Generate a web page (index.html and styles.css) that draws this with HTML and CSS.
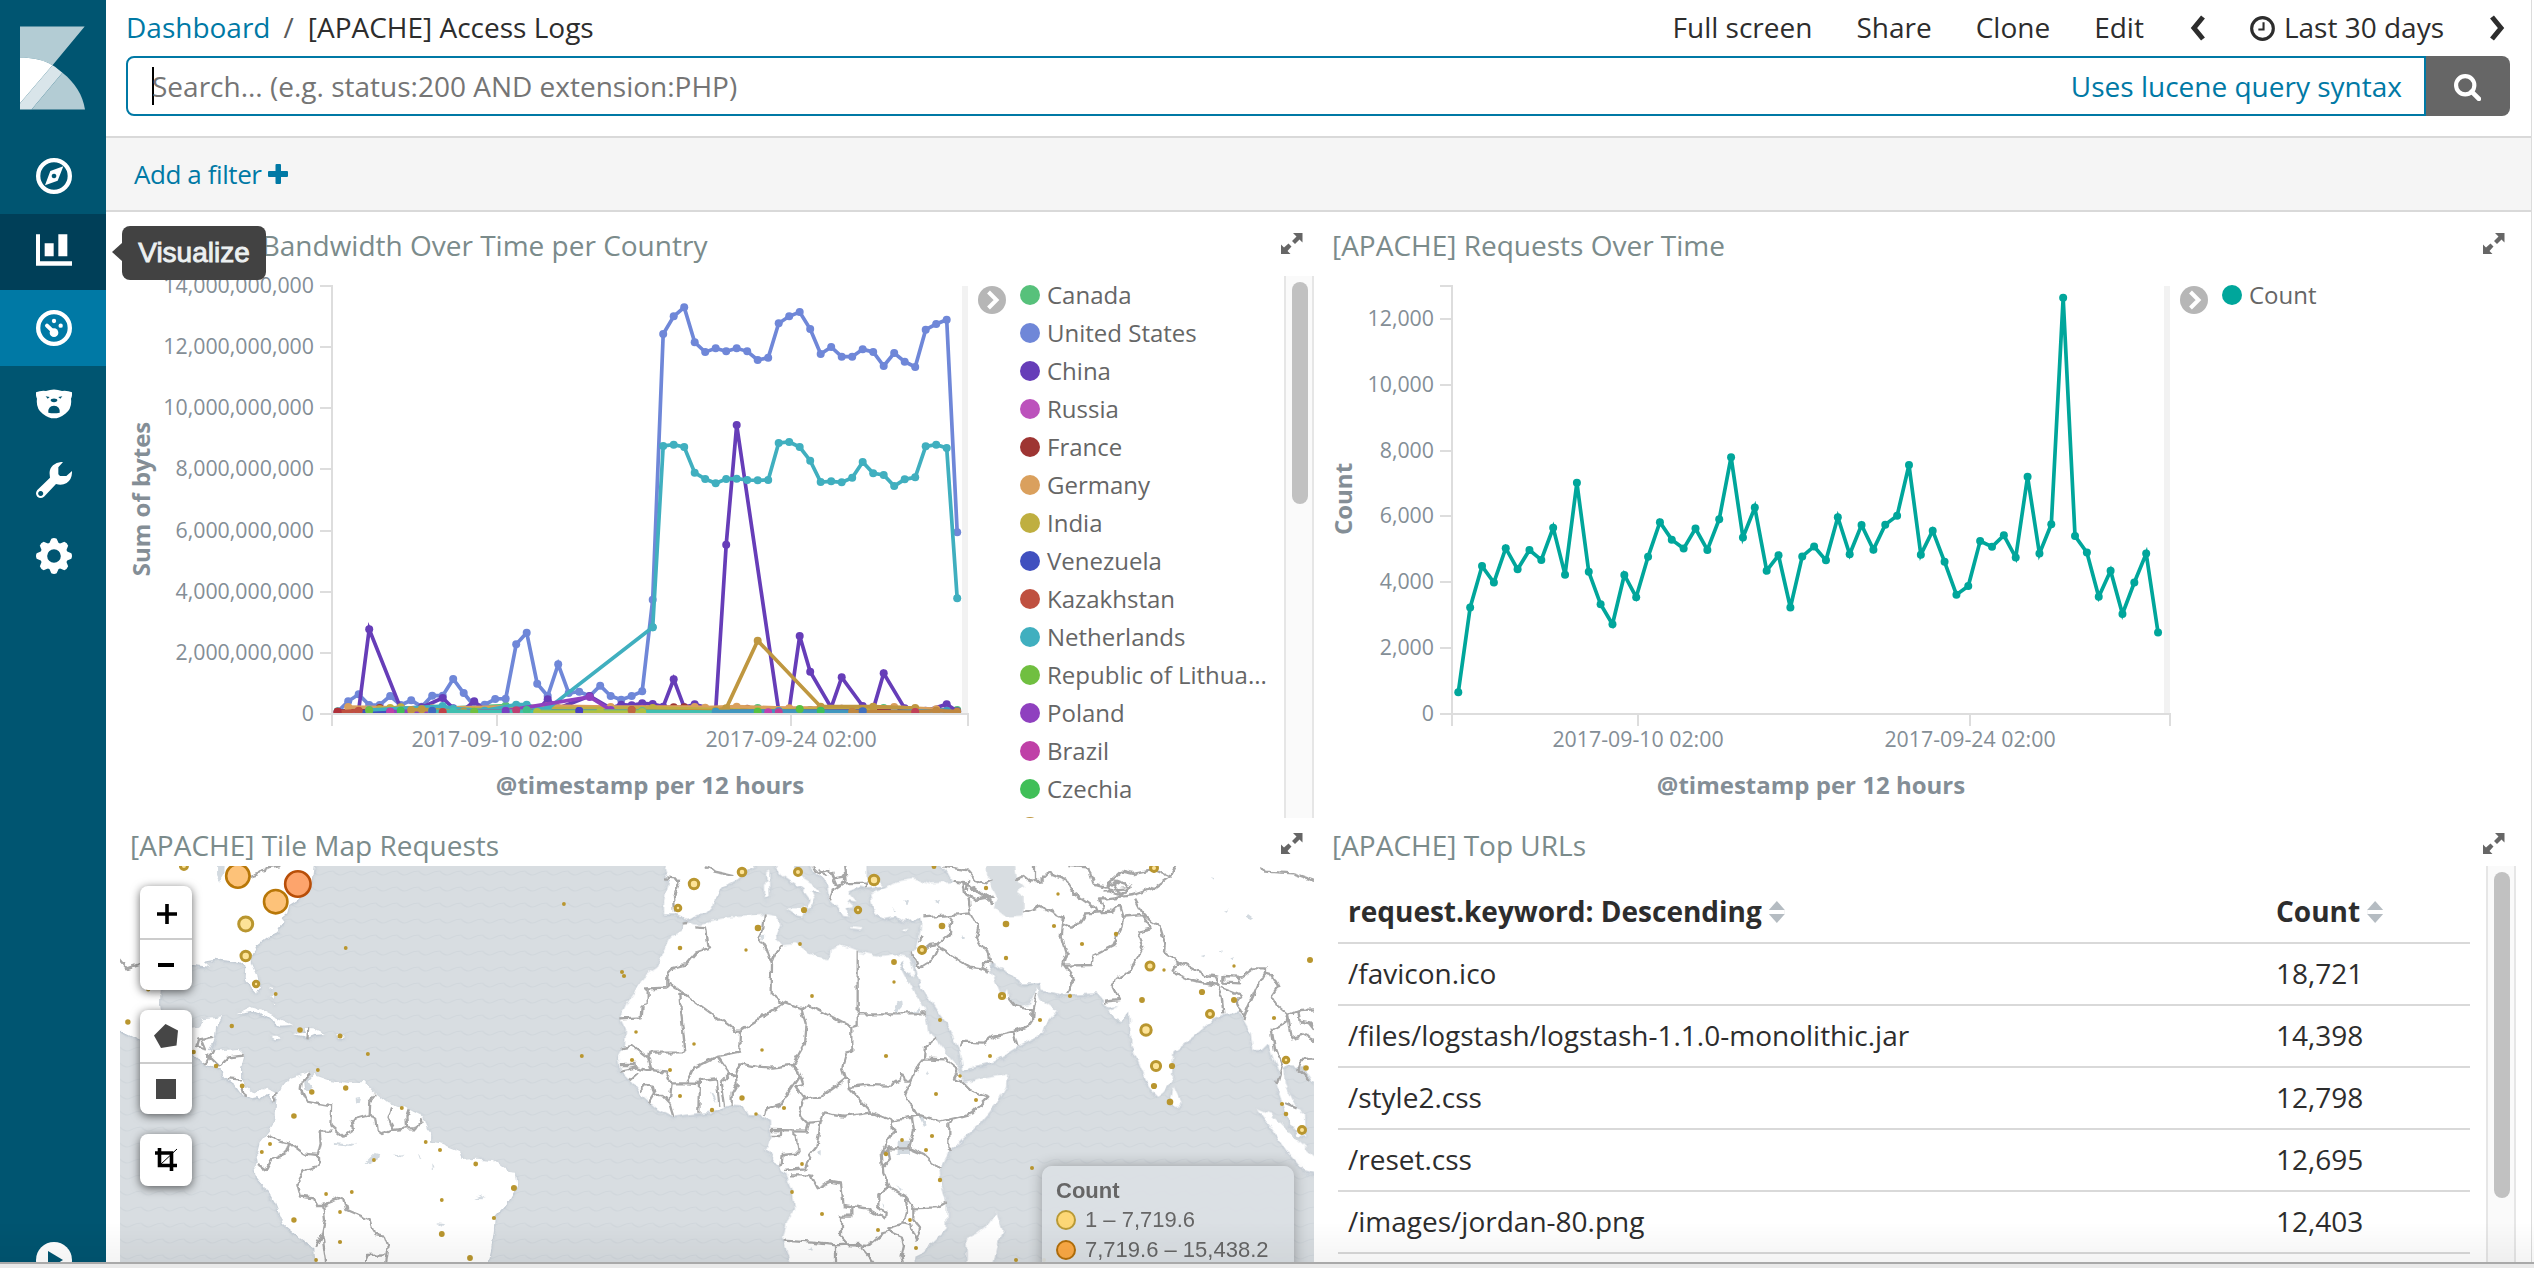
FILE: index.html
```html
<!DOCTYPE html>
<html lang="en">
<head>
<meta charset="utf-8">
<title>[APACHE] Access Logs - Kibana</title>
<link rel="stylesheet" href="styles.css">
</head>
<body>
<div class="app">
  <nav class="sidebar">
    <svg class="logo" viewBox="60 78 196 251"><path fill="#b3ccd4" d="M60 78H255L158 195C130 178 95 172 60 172Z"/><path fill="#fff" d="M60 172C95 172 130 178 158 195L60 310Z"/><path fill="#d9e5ea" d="M158 195C168 201 178 209 188 218L95 329H60V310Z"/><path fill="#b3ccd4" d="M188 218C226 248 249 285 256 329H95Z"/></svg>
    <a class="nav-item"><svg viewBox="108 474 108 108"><circle cx="162" cy="528" r="47.500" fill="none" stroke="#fff" stroke-width="13"/><path fill="#fff" fill-rule="evenodd" d="M190 499L173 542L135 556L151 513ZM162 521a7 7 0 1 0 .1 0Z"/></svg></a>
    <a class="nav-item is-hovered"><svg viewBox="108 702 108 108"><path fill="#fff" d="M108 703h12v81h96v13H108ZM134 730h27v39h-27ZM175 703h27v66h-27Z"/></svg><span class="tooltip">Visualize</span></a>
    <a class="nav-item is-active"><svg viewBox="108 30 108 108"><circle cx="162" cy="84" r="47.500" fill="none" stroke="#fff" stroke-width="13"/><g fill="#fff"><circle cx="162" cy="63" r="6.500"/><circle cx="182" cy="77" r="6.500"/><circle cx="162" cy="98" r="13"/></g><path d="M141 77L162 97" stroke="#fff" stroke-width="12" stroke-linecap="round"/></svg></a>
    <a class="nav-item"><svg viewBox="108 258 108 108"><path fill="#fff" d="M108 277Q122 271 138 273Q162 264 186 273Q202 271 216 277Q217 289 213 296Q217 325 196 341Q178 355 162 355Q146 355 128 341Q107 325 111 296Q107 289 108 277Z"/><g fill="#005571"><path d="M145 338Q143 318 162 317Q181 318 179 338Q162 341 145 338Z"/><ellipse cx="162" cy="301" rx="10" ry="5.500"/><path d="M137 289l12 2-6 5ZM187 289l-12 2 6 5Z"/></g></svg></a>
    <a class="nav-item"><svg viewBox="108 486 108 108"><path fill="#fff" fill-rule="evenodd" d="M189 486Q171 485 159 496Q147 507 149 523L150 533L112 570Q104 580 112 590Q122 598 132 590L168 552Q186 557 200 549Q217 538 216 513L199 528L180 528L175 523V502ZM122 573a7.500 7.500 0 1 0 .1 0Z"/></svg></a>
    <a class="nav-item"><svg viewBox="-54 -54 108 108"><circle r="31" fill="none" stroke="#fff" stroke-width="21"/><g fill="#fff"><path id="tooth" d="M-15-36L-8-52Q0-56 8-52L15-36Z"/><use href="#tooth" transform="rotate(45)"/><use href="#tooth" transform="rotate(90)"/><use href="#tooth" transform="rotate(135)"/><use href="#tooth" transform="rotate(180)"/><use href="#tooth" transform="rotate(225)"/><use href="#tooth" transform="rotate(270)"/><use href="#tooth" transform="rotate(315)"/></g></svg></a>
    <a class="nav-toggle"><svg viewBox="0 0 36 36"><circle cx="18" cy="18" r="18" fill="#fff"/><path fill="#005571" d="M12 9L27 18L12 27Z"/></svg></a>
  </nav>

  <main class="main">
    <header class="topbar">
      <div class="crumbs"><a>Dashboard</a><span class="slash">/</span><span>[APACHE] Access Logs</span></div>
      <div class="actions">
        <a class="act-full">Full screen</a><a class="act-share">Share</a><a class="act-clone">Clone</a><a class="act-edit">Edit</a>
        <svg class="chev" viewBox="0 0 18 26"><path d="M15 2L6 13L15 24" fill="none" stroke="#2d2d2d" stroke-width="5"/></svg>
        <a class="time"><svg viewBox="0 0 24 24"><circle cx="12" cy="12" r="10.400" fill="none" stroke="#2d2d2d" stroke-width="3"/><path d="M13 6V13H8" fill="none" stroke="#2d2d2d" stroke-width="2"/></svg><span>Last 30 days</span></a>
        <svg class="chev chev-next" viewBox="0 0 18 26"><path d="M3 2L12 13L3 24" fill="none" stroke="#2d2d2d" stroke-width="5"/></svg>
      </div>
    </header>
    <div class="search">
      <div class="search-input"><i class="caret"></i><span class="placeholder">Search... (e.g. status:200 AND extension:PHP)</span><a class="syntax">Uses lucene query syntax</a></div>
      <button class="search-btn"><svg viewBox="0 0 26 26"><circle cx="10.800" cy="10.800" r="8.800" fill="none" stroke="#fff" stroke-width="4"/><path d="M17 17L24 24" stroke="#fff" stroke-width="4.500" stroke-linecap="round"/></svg></button>
    </div>
    <div class="filters"><a>Add a filter</a><svg viewBox="0 0 20 20"><path fill="#0079a5" d="M7.500 1Q7.500 0 8.500 0H12Q13 0 13 1V7H19Q20 7 20 8V12Q20 13 19 13H13V19Q13 20 12 20H8.500Q7.500 20 7.500 19V13H1Q0 13 0 12V8Q0 7 1 7H7.500Z"/></svg></div>

    <div class="grid">
      <section class="panel">
        <div class="panel-head"><h2>[APACHE] Bandwidth Over Time per Country</h2><svg class="expand" viewBox="0 0 22 22"><use href="#expand-icon"/></svg></div>
        <div class="panel-body vis">
          <svg class="chart" id="bandwidth" width="850" height="552"></svg>
          <svg class="toggle" viewBox="0 0 28 28"><circle cx="14" cy="14" r="14" fill="#b6b6b6"/><path d="M10.500 6L18.500 14L10.500 22" fill="none" stroke="#fff" stroke-width="4"/></svg>
          <ul class="legend">
            <li><i style="background:#57c17b"></i>Canada</li>
            <li><i style="background:#6f87d8"></i>United States</li>
            <li><i style="background:#663db8"></i>China</li>
            <li><i style="background:#bc52bc"></i>Russia</li>
            <li><i style="background:#9e3533"></i>France</li>
            <li><i style="background:#daa05d"></i>Germany</li>
            <li><i style="background:#bfaf40"></i>India</li>
            <li><i style="background:#4050bf"></i>Venezuela</li>
            <li><i style="background:#bf5040"></i>Kazakhstan</li>
            <li><i style="background:#40afbf"></i>Netherlands</li>
            <li><i style="background:#70bf40"></i>Republic of Lithua...</li>
            <li><i style="background:#8f40bf"></i>Poland</li>
            <li><i style="background:#bf40a7"></i>Brazil</li>
            <li><i style="background:#40bf58"></i>Czechia</li>
            <li><i style="background:#bf9740"></i>United Kingdom</li>
          </ul>
          <div class="scroll"><i class="thumb"></i></div>
        </div>
      </section>

      <section class="panel">
        <div class="panel-head"><h2>[APACHE] Requests Over Time</h2><svg class="expand" viewBox="0 0 22 22"><use href="#expand-icon"/></svg></div>
        <div class="panel-body vis">
          <svg class="chart" id="requests" width="850" height="552"></svg>
          <svg class="toggle" viewBox="0 0 28 28"><circle cx="14" cy="14" r="14" fill="#b6b6b6"/><path d="M10.500 6L18.500 14L10.500 22" fill="none" stroke="#fff" stroke-width="4"/></svg>
          <ul class="legend"><li><i style="background:#00a69b"></i>Count</li></ul>
        </div>
      </section>

      <section class="panel">
        <div class="panel-head"><h2>[APACHE] Tile Map Requests</h2><svg class="expand" viewBox="0 0 22 22"><use href="#expand-icon"/></svg></div>
        <div class="panel-body map">
          <svg class="map-canvas" width="1194" height="396">
            <defs>
              <symbol id="expand-icon" viewBox="0 0 22 22"><path fill="#666" d="M12 0H21.500V9.500L18.500 6.500L14 11L11 8L15.500 3.500ZM9.500 21H0V11.500L3 14.500L7.500 10.500L10.500 13.500L6.500 18Z"/><path d="M9 9L13 13" stroke="#fff" stroke-width="1"/></symbol>
              <pattern id="waves" width="21.330" height="16" patternUnits="userSpaceOnUse"><path d="M0 5Q5.300 11 10.660 8T21.330 5" fill="none" stroke="#d1d7dc" stroke-width="1.200"/></pattern>
              <filter id="coast" x="-2%" y="-2%" width="104%" height="104%"><feDropShadow dx="0" dy="1" stdDeviation="1.600" flood-color="#a9b6c4" flood-opacity=".8"/></filter>
              <filter id="rough" filterUnits="userSpaceOnUse" x="-10" y="-10" width="1214" height="416" color-interpolation-filters="sRGB"><feTurbulence type="fractalNoise" baseFrequency=".11" numOctaves="2" seed="4"/><feDisplacementMap in="SourceGraphic" scale="7" xChannelSelector="R" yChannelSelector="G"/></filter>
            </defs>
            <rect width="1194" height="396" fill="#d8dde1"/><rect width="1194" height="396" fill="url(#waves)"/>
            <g filter="url(#rough)">
            <g filter="url(#coast)" fill="#fff">
              <g transform="translate(-20 -46) scale(.35714 .33333)">
                <path d="M20 100L605 100L596 180L560 235L530 255L524 280L510 292L515 305L500 322L505 332L470 350L440 375L425 400L425 430L440 465L445 500L437 521L420 500L408 470L410 445L385 425L340 420L320 416L290 422L308 440L262 435L200 425L175 460L170 500L168 550L172 580L200 615L240 625L275 620L288 598L342 592L325 625L320 660L305 690L340 694L385 690L402 705L392 745L392 775L405 800L425 815L440 820L465 803L485 812L497 830L485 845L470 820L450 838L440 828L425 832L400 825L380 795L358 778L340 750L290 730L260 700L200 690L110 658L20 610Z"/>
                <path d="M495 835L510 800L530 775L585 756L572 785L575 812L590 812L585 785L600 765L640 780L700 790L740 786L765 815L805 850L850 860L905 890L915 925L930 945L930 965L950 970L1010 995L1015 1020L1050 1016L1100 1020L1140 1052L1165 1055L1168 1095L1140 1150L1105 1190L1103 1230L1095 1290L1080 1360L605 1360L600 1285L560 1255L515 1215L490 1150L460 1095L435 1065L432 1040L445 1030L440 1000L448 965L475 930L492 900L492 860Z"/>
                <path d="M382 580L420 560L455 570L490 590L540 614L505 617L470 592L425 573ZM545 642L575 638L565 624L600 625L632 642L600 645L585 652ZM480 650L500 650L508 655L490 658ZM662 645L685 645L684 653L664 653ZM474 530l8-6 2 12ZM486 548l8 4 -4 4ZM475 500l14 4-4 4Z"/>
              </g>
              <g transform="translate(480 -46) scale(.33333)">
                <path d="M250 306L300 315L330 303L380 293L450 288L500 283L532 290L538 315L528 340L530 360L545 376L590 372L630 400L680 424L692 410L695 385L720 373L780 398L830 410L880 402L925 410L938 455L940 470L925 460L905 422L900 432L930 490L975 570L985 640L1010 662L1040 700L1080 745L1078 765L1095 790L1150 775L1222 763L1218 800L1190 850L1140 910L1085 960L1045 1000L1018 1050L1025 1100L1040 1150L1040 1225L1000 1265L950 1310L935 1360L580 1360L560 1290L548 1258L562 1200L585 1165L577 1110L555 1060L525 1020L500 990L512 950L510 900L490 888L445 885L430 860L390 856L335 875L290 880L220 890L170 865L125 825L95 785L60 750L55 710L72 680L75 630L60 600L85 545L115 500L130 470L175 440L185 400L215 350L245 330Z"/>
                <path d="M195 150L205 120L470 100L462 140L430 160L410 178L370 200L345 230L340 260L318 282L290 285L262 300L245 290L225 280L192 280L192 240L205 185Z"/>
                <path d="M525 100L530 145L545 165L580 190L610 210L632 240L620 272L632 265L645 240L632 210L662 218L640 195L612 178L585 140L585 100ZM562 265L618 264L610 290L590 285ZM495 190L510 185L512 230L495 238ZM498 160L508 155L508 185L500 182Z"/>
                <path d="M625 100L628 135L650 160L680 190L688 235L715 262L730 288L745 290L740 265L760 262L740 240L770 245L745 215L780 200L805 205L850 200L830 180L800 178L800 100ZM752 318l34 4-2 6-30-3ZM905 332l20-6-8 10Z"/>
                <path d="M810 220L850 208L890 185L940 177L990 190L1060 187L1045 160L1000 120L1000 100L2190 100L2190 790L2142 788L2110 740L2062 735L2050 745L2055 790L2090 865L2112 880L2115 950L2095 945L2070 910L2055 870L2030 800L2040 760L2020 715L2005 670L1985 690L1960 690L1952 640L1915 575L1870 582L1840 600L1780 650L1720 695L1715 780L1690 815L1672 828L1650 805L1625 750L1595 680L1587 575L1565 603L1540 595L1525 572L1555 555L1525 560L1490 520L1400 525L1325 512L1320 485L1315 490L1260 490L1220 455L1178 430L1168 440L1185 480L1208 535L1225 510L1228 540L1250 563L1290 550L1308 505L1325 540L1370 572L1335 615L1330 640L1250 680L1180 725L1090 748L1075 680L1040 610L1010 570L975 520L950 470L945 440L935 405L950 385L958 350L965 310L960 292L910 303L890 290L855 297L825 280L815 245Z"/>
                <path d="M1190 1178L1208 1232L1192 1270L1175 1360L1100 1360L1100 1255L1130 1240L1170 1210ZM1720 798L1742 845L1730 862L1712 850ZM1973 868L2015 885L2080 950L2142 1005L2180 1040L2180 1070L2110 1050L2065 1000L2025 940Z"/>
              </g>
            </g>
            <g fill="#d3dae0">
              <path fill="#d8dde1" transform="translate(480 -46) scale(.33333)" d="M1160 100L1240 100L1252 180L1270 200L1250 215L1270 230L1270 290L1220 293L1185 265L1190 230L1165 180Z"/>
              <path transform="translate(480 -46) scale(.33333)" d="M885 575l10-25 12-10 2 20-20 22ZM925 580l30-15 6 8-30 10ZM890 962h40v40h-40ZM955 885l15 6 10 25-8 4ZM655 995l10-5v16l-8 2ZM330 815l14 10 5 25-12-18ZM480 340l14 10-5 6ZM975 750l12 10-5 5ZM1932 285l12-6 16 12-12 6ZM1860 390l12 2-4 6ZM1830 172l10 4-6 4ZM1868 272l16-3-4 6ZM1802 408l14-4-4 8ZM1888 412l14-4-6 10ZM910 240l14 4-6 10ZM1000 245l24-6-8 12ZM880 265l8 6-6 4ZM1085 345l10 8-4 8ZM620 1290l16-8-2 10ZM850 1150l8 8-4 6ZM885 1095l24 14-6 4Z"/>
              <path transform="translate(-20 -46) scale(.35714 .33333)" d="M325 110L350 110L348 165L335 188L325 165ZM578 780L590 795L595 812L582 812ZM716 830l12-2-3 20-8 4ZM740 1030l30-32 12 4-8 22-20 6ZM820 1000l30 4-8 8ZM890 1000l10 14-4 4ZM930 1030l10 15-8 2ZM1048 1136l26-12-8 14ZM942 1210l16 2-8 8ZM655 966l60 6-12 6-48-6Z"/>
            </g>
            <g class="borders">
              <path transform="translate(-20 -46) scale(.35714 .33333)" d="M588 760L565 785L562 810L578 845L625 855L650 860L648 920L680 950L708 930L705 900L755 885L757 840L770 822M755 885L770 890L775 930L790 942L820 930L805 895L815 862M820 930L860 925L858 890L865 868M860 925L885 925L903 895M650 935L615 935L618 970L610 1005L570 1000L530 968L500 960L472 942M530 968L520 1000L480 1020L465 1050L445 1035M610 1005L612 1038L570 1050L550 1090L560 1130L600 1135L605 1155L625 1155L680 1132L690 1170L755 1200L768 1245L798 1250L808 1280L800 1340M625 1155L630 1200L622 1245L605 1280M622 1245L635 1340M735 1340L750 1305L800 1303M272 682L278 658L320 650M265 680L295 688L285 662M290 730L302 722L318 690M302 705L335 740L360 712L400 707M358 775L392 778M398 800L406 830M485 845L495 820M56 420L75 445L110 432M415 172L465 155L470 142L505 135M583 622L581 655"/>
              <path transform="translate(480 -46) scale(.33333)" d="M245 308L262 306M292 322L315 325L322 375L330 382L290 395L255 435L215 445L202 460L202 506L143 508L143 555L128 560L125 592L58 595M202 485L405 632L420 632L552 550L515 525L516 430L500 385L478 350L490 325L494 283M515 425L525 400L547 375M552 550L600 567L625 553L755 622L773 617L773 395M773 580L978 580M757 622L757 690L740 695L727 740L738 775L700 805L665 830L612 835M605 567L617 610L612 672L578 732L600 765L610 795L588 800L612 835L598 865L605 895L625 915M420 632L418 695L352 708L280 745L258 790L212 790M262 522L238 525L256 697L148 698L142 715L152 750M62 685L100 678L143 712M152 750L200 755L215 790L208 850L220 890M60 735L110 735M60 752L110 742L152 752M90 780L115 757M122 812L135 795L158 797L165 825L150 850M165 825L185 825L208 850M298 878L300 780L350 775L358 858M258 790L300 792M365 785L375 858M352 708L388 760L365 785M388 760L408 765L410 795L395 820L395 858M408 765L420 730L470 740L515 743L575 735L590 742L600 765L570 810L545 850L500 865L495 885M512 930L620 932L628 908L662 905L670 880L730 890L815 877M512 948L543 948L543 932M575 932L590 945L596 1000L548 1005L545 1030L540 1040M662 905L650 980L630 1005L615 1045L555 1050M570 1066L630 1066L650 1105L690 1085L720 1090L728 1155L800 1165L855 1195L857 1175L835 1165L835 1120L870 1105L850 1060L845 1000L880 930L872 900L815 877L750 805L745 780L732 775M750 800L800 795L870 797L900 780L905 755L915 785L932 785L955 735L972 715L975 680L1008 655M932 785L915 830L945 870L960 890L875 902M972 715L1035 718L1075 750L1062 775L1080 780L1110 810L1165 830L1115 880L1060 895L1020 905L960 885M1060 895L1048 915L1048 985L1060 995M935 890L942 930L928 985L865 985L850 1000M928 985L975 1005L1020 1048M850 1040L870 1020L865 985M1040 1145L1010 1162L940 1165L915 1130L870 1105M915 1130L918 1180L910 1210L865 1225L870 1235L905 1250L912 1280L905 1310L912 1340M940 1165L940 1200L960 1225L948 1262L935 1230L930 1215L910 1210M757 1160L757 1190L723 1190L723 1250L745 1275L805 1278L850 1240L870 1235M548 1262L640 1268L705 1276L775 1272L830 1340M705 1276L705 1340M195 175L240 180L222 230L225 275M318 138L340 155L400 168M640 140L660 160L690 150L700 175L735 170L735 190L710 198L700 175M690 235L700 210L730 190L800 188L802 205M735 130L740 185M660 145L680 170M1030 140L1100 150L1125 180L1155 190L1175 180M1060 185L1100 190L1130 215L1170 240M1090 190L1095 220L1125 240L1178 230M1105 180L1100 210M1120 200L1150 225L1180 250M1105 230L1112 280L970 292M1112 280L1135 320L1128 350L1165 400L1172 430M1055 290L1050 340L1012 372L990 375L960 400M1012 372L1020 385L1110 440L1145 445L1170 455M1012 385L995 420L960 442L945 440M935 400L950 440M1145 440L1155 428L1180 430M968 345L960 365M1082 680L1088 665L1155 668L1180 650L1240 635L1290 615L1296 605L1298 570L1308 520M1240 635L1253 678M1225 535L1245 560L1296 568M1245 180L1270 168L1295 188L1320 185L1345 160L1400 182L1420 220L1485 265L1490 278M1305 120L1305 188M1405 138L1465 142L1480 190L1515 200L1565 155L1600 162L1660 150L1710 170L1728 135M1710 170L1660 205L1600 225L1520 235L1500 235L1510 275L1490 278M1520 200L1550 185L1595 200L1560 225L1530 215ZM1510 212L1580 205M1540 190L1560 220M1605 235L1628 280L1660 310L1680 320L1695 370L1692 395L1735 425L1815 465L1855 470M1270 278L1320 260L1390 295L1385 350L1400 400L1390 432L1425 480L1410 495L1402 520M1390 310L1415 320L1445 305L1460 280L1535 275L1560 255L1570 290L1565 320L1540 375L1480 405L1475 435L1395 437M1570 290L1625 285L1655 325L1615 335L1630 380L1615 410L1580 460L1540 480L1538 495L1560 540L1515 545M1735 425L1715 455L1770 480L1855 495M1855 470L1852 500L1865 530L1870 580M1870 468L1915 470L1920 490L1870 488ZM1860 500L1900 515L1925 525L1910 545L1930 590M1920 475L1960 445L1995 445L1995 460L1975 495L1945 560L1930 597M1995 460L2015 465L2035 500L2015 530L2030 555L2065 585L2060 605L2015 630L2025 690L2045 740L2030 795M2065 585L2100 570L2150 568M2065 590L2075 655L2110 645L2150 665M2095 575L2100 605L2130 610L2150 635M2150 718L2105 720L2095 745L2130 780M2055 850L2090 865M1983 140L1995 155L2080 160L2150 184"/>
            </g>
            </g>
            <g id="hits"></g>
          </svg>
          <div class="map-tools">
            <div class="tool-group"><a class="tool plus"><svg viewBox="0 0 20 20"><path fill="#000" d="M8.200 0H11.800V8.200H20V11.800H11.800V20H8.200V11.800H0V8.200H8.200Z"/></svg></a><a class="tool"><svg viewBox="0 0 20 20"><path fill="#000" d="M2 8H18V12H2Z"/></svg></a></div>
            <div class="tool-group"><a class="tool"><svg class="wide" viewBox="0 0 24 24"><path fill="#464646" d="M11.500 0L24 6.500L22.500 21.500L7 24L0 11.500Z"/></svg></a><a class="tool"><svg viewBox="0 0 20 20"><path fill="#464646" d="M0 0H20V20H0Z"/></svg></a></div>
            <div class="tool-group"><a class="tool"><svg class="wide" viewBox="0 0 24 24"><path d="M5.500 0V17.500H23M1 5H17.500V23" fill="none" stroke="#000" stroke-width="3.600"/><path d="M6 17L23 1" stroke="#000" stroke-width="1"/></svg></a></div>
          </div>
          <div class="map-legend"><b>Count</b><p><i class="lo"></i>1 – 7,719.6</p><p><i class="hi"></i>7,719.6 – 15,438.2</p></div>
        </div>
      </section>

      <section class="panel">
        <div class="panel-head"><h2>[APACHE] Top URLs</h2><svg class="expand" viewBox="0 0 22 22"><use href="#expand-icon"/></svg></div>
        <div class="panel-body table-body">
          <div class="table">
            <div class="tr th"><span>request.keyword: Descending<i class="sort"></i></span><span>Count<i class="sort"></i></span></div>
            <div class="tr"><span>/favicon.ico</span><span>18,721</span></div>
            <div class="tr"><span>/files/logstash/logstash-1.1.0-monolithic.jar</span><span>14,398</span></div>
            <div class="tr"><span>/style2.css</span><span>12,798</span></div>
            <div class="tr"><span>/reset.css</span><span>12,695</span></div>
            <div class="tr"><span>/images/jordan-80.png</span><span>12,403</span></div>
            <div class="tr"></div>
          </div>
          <div class="scroll"><i class="thumb"></i></div>
        </div>
      </section>
    </div>
  </main>
</div>
<div class="window-edge"></div>
<script src="charts.js"></script>
</body>
</html>
```
FILE: styles.css
```css
* { box-sizing: border-box; }
html, body { margin: 0; height: 1268px; overflow: hidden; }
body { font-family: "Open Sans", "Noto Sans", sans-serif; font-size: 28px; color: #2d2d2d; background: #fff; position: relative; }
a { color: inherit; text-decoration: none; }
svg { display: block; flex: none; }
.app { display: flex; height: 1262px; overflow: hidden; }

.sidebar { width: 106px; flex: none; background: #005571; display: flex; flex-direction: column; }
.logo { width: 65px; height: 84px; margin: 26px 0 28px 20px; }
.nav-item { height: 76px; flex: none; display: flex; align-items: center; padding-left: 36px; position: relative; }
.nav-item svg { width: 36px; height: 36px; }
.nav-item.is-hovered { background: #003f58; }
.nav-item.is-active { background: #0079a5; }
.nav-toggle { margin-top: auto; padding-left: 36px; height: 20px; overflow: hidden; }
.nav-toggle svg { width: 36px; height: 36px; }
.tooltip { position: absolute; z-index: 5; left: 122px; top: 12px; width: 144px; height: 54px; border-radius: 8px; background: #424242; color: #ecf0f1; font: 28px/53px "Liberation Sans", Arial, sans-serif; text-align: center; -webkit-text-stroke: .9px #ecf0f1; }
.tooltip::before { content: ""; position: absolute; left: -10px; top: 17px; border: solid transparent; border-width: 9px 10px 9px 0; border-right-color: #424242; }

.main { flex: 1; margin-right: 2px; border-right: 1px solid #dcdcdc; display: flex; flex-direction: column; min-width: 0; }
.topbar { height: 56px; padding: 1px 24px 2px 20px; display: flex; justify-content: space-between; line-height: 53px; white-space: nowrap; }
.crumbs a { color: #0079a5; }
.crumbs .slash { margin: 0 14px 0 13px; color: #5a5a5a; }
.actions { display: flex; align-items: center; }
.actions > a { margin-right: 44px; }
.chev { width: 18px; height: 26px; margin-left: 0; }
.actions .time { display: flex; align-items: center; gap: 9px; margin: 0 45px 0 44px; }
.time svg { width: 25px; height: 25px; margin-top: 2px; }
.chev-next { margin-left: 0; }
.search { display: flex; height: 60px; margin: 0 21px 20px 20px; }
.search-input { flex: 1; border: 2px solid #0079a5; border-radius: 8px 0 0 8px; display: flex; align-items: center; padding: 0 22px 0 24px; line-height: 55px; }
.caret { width: 2px; height: 38px; background: #000; margin-right: -2px; }
.placeholder { color: #757575; flex: 1; }
.syntax { color: #0079a5; }
.search-btn { width: 84px; border: 0; padding: 2px 0 0 28px; background: #666; border-radius: 0 8px 8px 0; }
.search-btn svg { width: 27px; height: 27px; }
.filters { height: 76px; flex: none; border: solid #d9d9d9; border-width: 2px 0; background: #f5f5f5; padding: 0 0 1px 28px; display: flex; align-items: center; gap: 6px; font-size: 26px; letter-spacing: -.42px; color: #0079a5; }
.filters svg { width: 20px; height: 20px; }

.grid { display: grid; grid-template-columns: 1194px 1194px; grid-template-rows: 598px 442px; gap: 2px 8px; padding: 8px 0 0 14px; }
.panel { min-width: 0; overflow: hidden; display: flex; flex-direction: column; }
.panel-head { height: 46px; flex: none; display: flex; justify-content: space-between; padding: 4px 11px 0 10px; }
.panel-head h2 { margin: 0; font-size: 28px; font-weight: 400; line-height: 42px; color: #7b8b8b; }
.expand { width: 22px; height: 22px; margin-top: 9px; }
.panel-body { flex: 1; min-height: 0; }
.vis { display: flex; }
.toggle { width: 28px; height: 28px; margin: 20px 0 0 8px; }
.legend { list-style: none; margin: 10px 0 0 14px; padding: 0; width: 265px; font-size: 24px; color: #666; }
.legend li { height: 38px; display: flex; align-items: center; gap: 7px; white-space: nowrap; line-height: 36px; }
.legend i { width: 20px; height: 20px; border-radius: 50%; flex: none; }
.scroll { width: 30px; flex: none; margin-left: auto; background: #fafafa; border: solid #e6e6e6; border-width: 0 2px; }
.vis .scroll { margin-top: 10px; }
.thumb { display: block; width: 16px; margin: 6px 0 0 6px; border-radius: 8px; background: #c1c1c1; height: 222px; }

.chart text { fill: #848e96; font-size: 21.33px; }
.chart .axis-title { font-size: 24px; font-weight: 700; }
.chart .axis { stroke: #ddd; stroke-width: 2; fill: none; }
.map { position: relative; overflow: hidden; }
.borders path { fill: none; stroke: #a6a6a6; stroke-width: 2.3; vector-effect: non-scaling-stroke; stroke-linejoin: round; }
.map-tools { position: absolute; left: 20px; top: 20px; display: flex; flex-direction: column; gap: 20px; }
.tool-group { width: 52px; background: #fff; border-radius: 8px; box-shadow: 0 2px 10px rgba(0,0,0,.6); }
.tool { height: 52px; display: flex; align-items: center; justify-content: center; }
.tool.plus { padding: 4px 0 0 2px; }
.tool + .tool { border-top: 2px solid #ccc; }
.tool svg { width: 20px; height: 20px; }
.tool .wide { width: 24px; height: 24px; }
.map-legend { position: absolute; left: 922px; top: 300px; width: 252px; height: 160px; padding: 13px 0 0 14px; border-radius: 10px; background: rgba(219,224,228,.92); box-shadow: 0 0 14px rgba(0,0,0,.3); font: 22px/30px "Liberation Sans", Arial, sans-serif; color: #666; }
.map-legend b { display: block; height: 26px; line-height: 24px; }
.map-legend p { margin: 0; height: 30px; display: flex; align-items: center; gap: 9px; }
.map-legend i { width: 20px; height: 20px; border-radius: 50%; border: 2px solid #b99a36; background: #fdd776; }
.map-legend .hi { background: #fba945; border-color: #b26f0b; }

.table-body { display: flex; }
.table { margin: 14px 0 0 16px; width: 1132px; }
.tr { display: flex; height: 62px; border-top: 2px solid #d9d9d9; padding: 0 0 0 10px; line-height: 59px; white-space: nowrap; }
.tr.th { border: 0; font-weight: 700; line-height: 62px; }
.tr span:first-child { width: 928px; }
.sort { display: inline-block; width: 16px; height: 22px; margin-left: 7px; background: #b5bcc2; clip-path: polygon(0 9px, 50% 0, 100% 9px, 100% 13px, 50% 100%, 0 13px, 0 9px); position: relative; top: 1px; }
.sort::after { content: ""; position: absolute; left: 0; top: 9px; width: 16px; height: 4px; background: #fff; }
.table-body .scroll { margin-right: 0; }
.table-body .thumb { height: 326px; }
.window-edge { height: 6px; border-top: 2px solid #a9a9a9; background: #e9e9e9; position: relative; }
.window-edge::before { content: ""; position: absolute; left: 0; right: 0; bottom: 6px; height: 40px; background: linear-gradient(rgba(0,0,0,0), rgba(0,0,0,.045)); }
```
FILE: charts.js
```js
var NS = 'http://www.w3.org/2000/svg';
function add(parent, name, attrs, text) {
  var el = document.createElementNS(NS, name);
  for (var k in attrs) el.setAttribute(k, attrs[k]);
  if (text !== undefined) el.textContent = text;
  parent.appendChild(el);
  return el;
}

function axes(svg, o) {
  add(svg, 'rect', { x: o.right - 6, y: 20, width: 6, height: 427, fill: '#f2f2f2' });
  o.draw();
  var d = 'M' + (o.left - 12) + ' 20H' + o.left + 'V460M' + o.right + ' 460V448H' + (o.left - 12);
  o.yTicks.forEach(function (t) {
    d += 'M' + (o.left - 12) + ' ' + t[0] + 'H' + o.left;
    add(svg, 'text', { x: o.left - 18, y: t[0] + 7, 'text-anchor': 'end' }, t[1]);
  });
  o.xTicks.forEach(function (t) {
    d += 'M' + t[0] + ' 448V460';
    add(svg, 'text', { x: t[0], y: 481, 'text-anchor': 'middle' }, t[1]);
  });
  add(svg, 'path', { d: d, 'class': 'axis' });
  add(svg, 'text', { x: (o.left + o.right) / 2, y: 528, 'text-anchor': 'middle', 'class': 'axis-title' }, '@timestamp per 12 hours');
  add(svg, 'text', { transform: 'translate(' + o.titleX + ' 233) rotate(-90)', 'text-anchor': 'middle', 'class': 'axis-title' }, o.title);
}

function line(svg, pts, color) {
  add(svg, 'polyline', { points: pts.map(function (p) { return p.join(); }).join(' '), fill: 'none', stroke: color, 'stroke-width': 3.7 });
  pts.forEach(function (p) { add(svg, 'circle', { cx: p[0], cy: p[1], r: 4, fill: color }); });
}

var bw = document.getElementById('bandwidth');
axes(bw, {
  left: 212, right: 848, titleX: 30, title: 'Sum of bytes',
  yTicks: [[20, '14,000,000,000'], [81, '12,000,000,000'], [142, '10,000,000,000'], [203, '8,000,000,000'], [265, '6,000,000,000'], [326, '4,000,000,000'], [387, '2,000,000,000'], [448, '0']],
  xTicks: [[377, '2017-09-10 02:00'], [671, '2017-09-24 02:00']],
  draw: function () {
    var clip = add(bw, 'clipPath', { id: 'plot' });
    add(clip, 'rect', { x: 212, y: 10, width: 636, height: 437 });
    var g = add(bw, 'g', { 'clip-path': 'url(#plot)' });
    function run(start, ys, color) {
      line(g, ys.map(function (y, k) { return [217.7 + 10.5 * (start + k), y / 3 - 6]; }), color);
    }
    function at(pairs, color) {
      line(g, pairs.map(function (p) { return [217.7 + 10.5 * p[0], p[1] / 3 - 6]; }), color);
    }
    at([[0, 1354], [4, 1350], [10, 1345], [16, 1337], [22, 1348], [30, 1350], [40, 1344], [45, 1350], [52, 1344], [59, 1350]], '#57c17b');
    run(0, [1355, 1324, 1303, 1335, 1335, 1308, 1335, 1321, 1340, 1307, 1307, 1257, 1299, 1338, 1334, 1317, 1316, 1153, 1118, 1271, 1308, 1213, 1299, 1295, 1308, 1277, 1308, 1319, 1308, 1294, 1019, 222, 169, 142, 247, 276, 265, 274, 265, 274, 300, 293, 190, 169, 156, 207, 282, 261, 290, 290, 268, 276, 318, 279, 305, 321, 209, 192, 179, 817], '#6f87d8');
    at([[0, 1355], [2, 1350], [3, 1108], [6, 1345], [8, 1342], [10, 1314], [11, 1345], [12, 1350], [13, 1324], [14, 1350], [19, 1352], [20, 1318], [21, 1345], [24, 1308], [26, 1345], [27, 1334], [28, 1336], [29, 1330], [30, 1332], [31, 1340], [32, 1258], [33, 1342], [34, 1333], [36, 1350], [37, 854], [38, 495], [42, 1352], [43, 1348], [44, 1128], [45, 1235], [47, 1343], [48, 1252], [50, 1338], [51, 1348], [52, 1240], [54, 1345], [56, 1352], [58, 1333], [59, 1354]], '#663db8');
    at([[0, 1356], [5, 1352], [15, 1348], [24, 1350], [29, 1346], [37, 1352], [53, 1350], [58, 1352]], '#bc52bc');
    at([[0, 1355], [4, 1344], [9, 1350], [20, 1346], [32, 1342], [33, 1342], [39, 1346], [48, 1346], [55, 1348]], '#9e3533');
    at([[1, 1341], [9, 1345], [20, 1338], [26, 1341], [34, 1341], [35, 1343], [38, 1340], [43, 1345], [53, 1341], [57, 1348]], '#daa05d');
    at([[4, 1348], [5, 1344], [6, 1342], [8, 1348], [30, 1344], [40, 1352], [51, 1345]], '#bfaf40');
    at([[2, 1355], [9, 1352], [23, 1353], [37, 1354], [50, 1353]], '#4050bf');
    at([[0, 1356], [2, 1352]], '#bf5040');
    at([[18, 1352]], '#bf5040');
    at([[28, 1350]], '#bf5040');
    at([[3, 1350], [10, 1338], [11, 1346], [14, 1352], [17, 1334], [18, 1334], [19, 1346], [20, 1346], [30, 1102]], '#40afbf');
    run(30, [1102, 558, 554, 561, 638, 657, 670, 657, 656, 660, 661, 660, 549, 546, 561, 602, 666, 664, 667, 653, 606, 640, 645, 678, 658, 652, 559, 554, 564, 1015], '#40afbf');
    at([[5, 1355], [16, 1352], [24, 1311], [26, 1350]], '#8f40bf');
    at([[7, 1350], [8, 1348], [12, 1355], [36, 1352], [37, 1345], [40, 1142], [46, 1340], [51, 1340], [55, 1344]], '#bf9740');
    at([[9, 1354], [11, 1354], [29, 1354], [36, 1356]], '#40bfb0');
    at([[19, 1356], [25, 1356], [29, 1356]], '#afbf40');
    at([[36, 1355], [42, 1353], [50, 1356], [58, 1352]], '#4097bf');
    at([[49, 1355], [55, 1356], [57, 1352], [59, 1355]], '#bf8740');
    [[0, 1356, '#b03038'], [3, 1351, '#70bf40'], [13, 1355, '#70bf40'], [40, 1355, '#58c040'], [44, 1347, '#58c040'], [46, 1352, '#40bf58'],
     [5, 1355, '#bf40a7'], [6, 1352, '#40bf58'], [18, 1350, '#40bf88'], [17, 1351, '#bf4073'], [9, 1352, '#4068bf'], [10, 1356, '#c04048'],
     [16, 1354, '#7840c0'], [23, 1353, '#4840bf'], [28, 1351, '#c06840'], [41, 1357, '#c040b0'], [42, 1357, '#c04097'], [50, 1354, '#4070bf'],
     [55, 1356, '#c04058']].forEach(function (p) { at([[p[0], p[1]]], p[2]); });
  }
});

/* Requests: bucket heights for the single Count series. */
var rq = document.getElementById('requests');
axes(rq, {
  left: 130, right: 848, titleX: 30, title: 'Count',
  yTicks: [[53, '12,000'], [119, '10,000'], [185, '8,000'], [250, '6,000'], [316, '4,000'], [382, '2,000'], [448, '0']],
  xTicks: [[316, '2017-09-10 02:00'], [648, '2017-09-24 02:00']],
  draw: function () {
    var ys = [1210, 973, 857, 903, 807, 866, 812, 840, 750, 881, 624, 873, 964, 1020, 882, 944, 831, 734, 783, 808, 752, 812, 726, 552, 777, 693, 870, 827, 973, 830, 802, 841, 720, 824, 742, 811, 741, 716, 574, 825, 758, 845, 937, 913, 787, 803, 771, 833, 607, 822, 740, 106, 773, 819, 943, 870, 991, 903, 822, 1043];
    line(rq, ys.map(function (y, k) { return [136.3 + 11.86 * k, y / 2.8 - 6]; }), '#00a69b');
  }
});

/* Map markers: x, y, radius. */
var hits = document.getElementById('hits');
function mark(list, x0, sx, fill, stroke) {
  list.forEach(function (m) {
    var w = m[2] > 10 ? 2.6 : 3, r = m[2];
    if (r < 4) add(hits, 'circle', { cx: x0 + m[0] / sx, cy: m[1] / 3 - 46, r: r, fill: stroke });
    else add(hits, 'circle', { cx: x0 + m[0] / sx, cy: m[1] / 3 - 46, r: r - w / 2, fill: fill, stroke: stroke, 'stroke-width': w, 'fill-opacity': .9 });
  });
}
var Y = '#fde08c', YS = '#b9962f';
mark([[386, 168, 13], [492, 245, 13]], -20, 2.8, '#fdbb6a', '#b87708');
mark([[554, 192, 14]], -20, 2.8, '#fd9a5c', '#b84e08');
mark([[235, 138, 5], [408, 312, 8.5], [408, 408, 6.2], [437, 492, 4.2], [492, 522, 1.9], [688, 384, 1.9], [1299, 252, 1.9], [78, 606, 2.7], [369, 618, 2.2], [560, 630, 2.8], [672, 648, 2.5], [750, 702, 2], [610, 750, 1.9], [593, 816, 2.7], [688, 804, 2.7], [543, 888, 2.8], [325, 738, 2.3], [398, 798, 2.4], [262, 696, 2.3], [845, 864, 2], [912, 966, 1.9], [952, 990, 2], [1052, 1032, 2.4], [1159, 1104, 3], [476, 972, 2], [453, 996, 2], [767, 1020, 1.9], [633, 1122, 1.9], [705, 1116, 1.9], [957, 1140, 1.9], [672, 1176, 1.9], [543, 1200, 2.7], [1103, 1194, 2.1], [957, 1242, 2.9], [672, 1266, 2.1], [1036, 1314, 2.9], [605, 1320, 1.9], [1349, 708, 2], [135, 508, 2.2]], -20, 2.8, Y, YS);
mark([[282, 192, 6.2], [426, 156, 5.3], [594, 156, 5], [822, 180, 6.2], [234, 264, 4.3], [774, 270, 4.2], [612, 270, 3.1], [474, 324, 3.3], [966, 390, 5], [1206, 528, 4.1], [1026, 318, 3.3], [882, 426, 2.9], [240, 384, 2.3], [438, 390, 1.7], [600, 372, 1.9], [882, 486, 1.7], [636, 528, 1.9], [66, 456, 2], [72, 468, 2.1], [108, 636, 1.8], [282, 672, 1.8], [486, 690, 1.8], [96, 720, 2.1], [210, 750, 2], [240, 828, 2], [336, 870, 2.2], [426, 834, 2.7], [468, 882, 1.8], [552, 864, 2.1], [858, 708, 2.1], [1020, 600, 2], [1080, 768, 1.8], [1008, 822, 2], [1128, 840, 2], [996, 948, 2.1], [906, 960, 1.9], [978, 990, 2], [858, 1002, 2.2], [1020, 1080, 2.2], [606, 1032, 1.9], [576, 1116, 1.9], [666, 1182, 2], [834, 1230, 2], [930, 1200, 1.9], [948, 1284, 2], [1002, 140, 2.4]], 480, 3, Y, YS);
mark([[582, 144, 5], [78, 204, 2.2], [138, 312, 3.3], [138, 414, 2.2], [282, 318, 2.1], [294, 222, 1.7], [366, 372, 2.1], [468, 342, 2.2], [570, 438, 5.5], [612, 450, 1.7], [546, 540, 2.9], [330, 528, 2.1], [240, 600, 2.1], [90, 708, 2], [558, 630, 6.7], [588, 738, 6.1], [636, 738, 3.1], [582, 798, 3.1], [630, 846, 3.3], [726, 516, 3.1], [750, 582, 5], [822, 540, 3], [822, 438, 1.7], [942, 594, 2.1], [1050, 420, 3], [978, 720, 4.3], [1038, 744, 2.8], [966, 852, 2.1], [978, 882, 2.3], [1026, 930, 5], [216, 1044, 2], [168, 1320, 2], [252, 1320, 2]], 840, 3, Y, YS);
```
